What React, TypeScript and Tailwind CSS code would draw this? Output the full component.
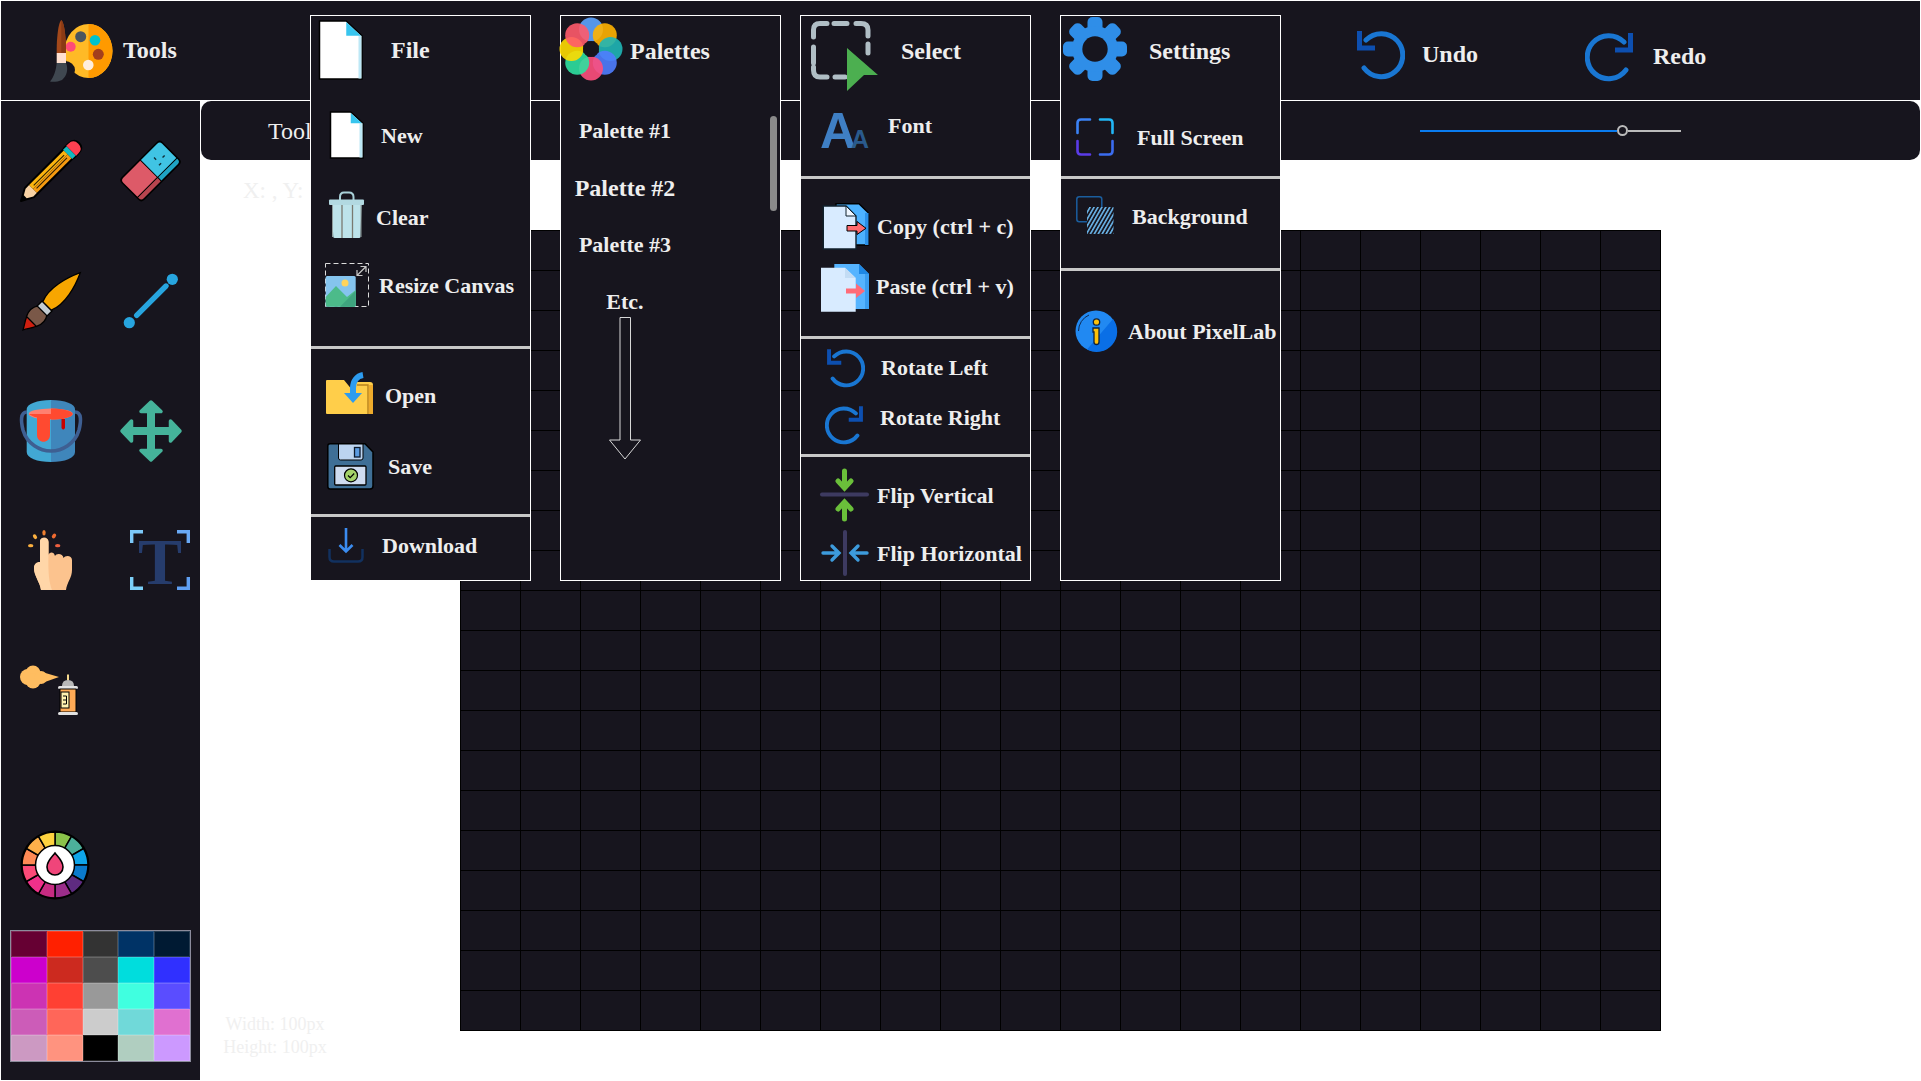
import type { ReactNode } from 'react'

const BG = '#17151e'

function Icon({ w, h, children, className = '' }: { w: number; h: number; children: ReactNode; className?: string }) {
  return (
    <svg width={w} height={h} viewBox={`0 0 ${w} ${h}`} className={`block shrink-0 overflow-visible ${className}`}>
      {children}
    </svg>
  )
}

function PaletteIcon() {
  return (
    <Icon w={62} h={62}>
      <ellipse cx="38.5" cy="31" rx="24" ry="27" fill="#ffba26" />
      <path d="M38.5 4a24 27 0 0 1 0 54Z" fill="#ff9a00" />
      <ellipse cx="15" cy="50" rx="10" ry="9" fill={BG} />
      <circle cx="30.7" cy="16.7" r="5.5" fill="#4a5560" />
      <circle cx="45" cy="20.3" r="5.3" fill="#00c2cc" />
      <circle cx="20.7" cy="26.7" r="5" fill="#ff4b77" />
      <circle cx="48.3" cy="34.3" r="5.5" fill="#a33f1c" />
      <circle cx="38.3" cy="45" r="5.3" fill="#ffeedd" />
      <path d="M6.7 33C6.5 20 8 3 11.3 0C14.7 3 16.2 20 16 33Z" fill="#a3481a" />
      <path d="M11.3 0C14.7 3 16.2 20 16 33H11.3Z" fill="#8a3a14" />
      <rect x="6.7" y="33" width="9.3" height="10" fill="#ffe0d0" />
      <path d="M6.7 43H16C18.5 49 17 56 12 60C8 62 2 62 0 61.5C4 57 6 50 6.7 43Z" fill="#3f4750" />
    </Icon>
  )
}

function FileIcon({ w, h }: { w: number; h: number }) {
  const fold = w * 0.35
  return (
    <Icon w={w} h={h}>
      <path d={`M1.5 1H${w - fold - 1}L${w - 1} ${fold}V${h - 1}H1.5Z`} fill="#fff" stroke="#000" strokeWidth="1.5" />
      <rect x={w - 4.5} y={fold} width="3" height={h - fold - 1.5} fill="#bde8f6" />
      <path d={`M${w - fold - 1} 2L${w - 2} ${fold}H${w - fold - 1}Z`} fill="#38c5ee" />
    </Icon>
  )
}

function TrashIcon() {
  return (
    <Icon w={35} h={48}>
      <path d="M11 9V6Q11 1.5 15 1.5H20Q24.5 1.5 24.5 6V9" fill="none" stroke="#a9d0d8" strokeWidth="2" />
      <path d="M3 14H32.5L31.5 45.5Q31.5 47 30 47H6Q4.2 47 4.2 45.5Z" fill="#bde3ea" />
      <rect x="0" y="8.5" width="35" height="5.5" rx="1" fill="#b2d9e1" />
      <path d="M13 14V47M23.5 14V47" stroke="#7a7a70" strokeWidth="1.3" />
      <path d="M3.5 14V46M32 14V46" stroke="#8f9d9c" strokeWidth="1" />
    </Icon>
  )
}

function ResizeIcon() {
  return (
    <Icon w={44} h={44}>
      <rect x="0.5" y="0.5" width="43" height="43" fill="none" stroke="#dcdcdc" strokeWidth="1" strokeDasharray="5 3" />
      <rect x="0.7" y="13" width="30" height="30.7" rx="1.5" fill="#85c4ee" />
      <circle cx="20" cy="20" r="3.5" fill="#ffd45c" />
      <path d="M0.7 41V34L11 23L22 34L30.7 27V42Q30.7 43.7 29 43.7H2.5Q0.7 43.7 0.7 41Z" fill="#4cbb8a" />
      <path d="M15 43.7L30.7 28V42Q30.7 43.7 29 43.7Z" fill="#3fa57f" />
      <path d="M32 12.5L41 3.5M35.5 3.5H41V9M32 7V12.5H37.5" fill="none" stroke="#c8c8c8" strokeWidth="1.2" />
    </Icon>
  )
}

function OpenIcon() {
  return (
    <Icon w={48} h={40}>
      <path d="M0 6Q0 5 1 5H18L27 16V7H44Q47 7 47 10V38Q47 39 46 39H1Q0 39 0 38Z" fill="#ffce4a" />
      <path d="M31 10H42V39" fill="none" stroke="#b9811c" strokeWidth="1.4" />
      <path d="M43 10H47V39H43Z" fill="#eeab2c" />
      <path d="M37 0C31 1 27 6 27 13V20" fill="none" stroke="#2d9cf0" strokeWidth="6" />
      <path d="M18 18H36L27 28Z" fill="#2d9cf0" />
    </Icon>
  )
}

function SaveIcon() {
  return (
    <Icon w={47} h={47}>
      <path d="M3 0.8H38L46 9V43Q46 46 43 46H3Q0.8 46 0.8 43V3Q0.8 0.8 3 0.8Z" fill="#3f6f96" stroke="#000" strokeWidth="1.5" />
      <path d="M11.5 1H36V15Q36 17 34 17H13.5Q11.5 17 11.5 15Z" fill="#bcd4f0" stroke="#000" strokeWidth="1" />
      <rect x="27.5" y="4.5" width="5.5" height="9.5" fill="#5b9be0" stroke="#0c1a2c" strokeWidth="1.3" />
      <rect x="7.7" y="23" width="31.3" height="19" rx="1" fill="#cfdcf0" stroke="#000" strokeWidth="1.3" />
      <circle cx="24" cy="32.3" r="6.5" fill="#a4d36a" stroke="#000" strokeWidth="1.2" />
      <path d="M21 32.5L23.2 34.7L27.2 30.5" fill="none" stroke="#000" strokeWidth="1.2" />
    </Icon>
  )
}

function DownloadIcon() {
  return (
    <Icon w={36} h={35}>
      <path d="M1.5 21V29Q1.5 33.5 6 33.5H30Q34.5 33.5 34.5 29V21" fill="none" stroke="#12315f" strokeWidth="2.5" />
      <path d="M18 0V23M11.5 17L18 23.5L24.5 17" fill="none" stroke="#3b8cf0" strokeWidth="2.6" />
    </Icon>
  )
}

function FlowerIcon() {
  const petals = ['#5da4ff', '#ffb300', '#1fb6b6', '#4f7dff', '#ff4f7d', '#2ee0a0', '#ffdc00', '#ff5a6a']
  return (
    <Icon w={62} h={62}>
      {petals.map((c, i) => {
        const a = (i * Math.PI) / 4
        return <circle key={c} cx={31 + 19.5 * Math.sin(a)} cy={31 - 19.5 * Math.cos(a)} r="12" fill={c} opacity="0.9" />
      })}
      <circle cx="31" cy="31" r="8" fill={BG} />
    </Icon>
  )
}

function SelectIcon() {
  return (
    <Icon w={67} h={70}>
      <path
        d="M2.5 16V9Q2.5 2.5 9 2.5H16M23 2.5H36M45 2.5H50Q57 2.5 57 9V15M57 23V32M2.5 26V42M2.5 46V49Q2.5 56 9 56H16M24 56H34"
        fill="none"
        stroke="#b0bec5"
        strokeWidth="5"
        strokeLinecap="round"
      />
      <path d="M36 27L67 54H53L36 70Z" fill="#4caf50" />
    </Icon>
  )
}

function FontIcon() {
  return (
    <Icon w={48} h={37}>
      <text x="-1" y="36" fontFamily="'Liberation Sans', sans-serif" fontWeight="700" fontSize="50" fill="#3f7fc4">A</text>
      <text x="30" y="36" fontFamily="'Liberation Sans', sans-serif" fontWeight="700" fontSize="25" fill="#2a5a8c">A</text>
    </Icon>
  )
}

function CopyIcon() {
  return (
    <Icon w={47} h={47}>
      <path d="M14 0.8H37L46.5 10V42H14Z" fill="#4db2ff" stroke="#000" strokeWidth="1.4" />
      <path d="M43 10H46.5V42H43Z" fill="#2b90e8" />
      <path d="M1.3 3H24L34 13V46H1.3Z" fill="#d8ebff" stroke="#10202c" strokeWidth="1.4" />
      <path d="M24 3V13H34Z" fill="#eef6ff" stroke="#10202c" strokeWidth="1" />
      <path d="M25 22.5H35V18.5L44 25.3L35 31.5V28H25Z" fill="#ff6b70" stroke="#000" strokeWidth="1" />
    </Icon>
  )
}

function PasteIcon() {
  return (
    <Icon w={48} h={48}>
      <path d="M13.3 0H38L48 10V45H13.3Z" fill="#56b4ff" />
      <path d="M38 0L48 10H38Z" fill="#1e88e5" />
      <path d="M44 10H48V45H44Z" fill="#3a9df0" />
      <path d="M0 3.7H24L34.7 14V47.7H0Z" fill="#d8ebff" />
      <path d="M24 3.7L34.7 14H24Z" fill="#c3dcf4" />
      <path d="M25 24.5H35V19.5L44 27L35 34V29.5H25Z" fill="#ff6b78" />
    </Icon>
  )
}

function RotateIcon({ w, h, flip = false, stroke = 5 }: { w: number; h: number; flip?: boolean; stroke?: number }) {
  return (
    <svg width={w} height={h} viewBox="0 0 48 52" className={`block shrink-0 ${flip ? '-scale-x-100' : ''}`}>
      <path d="M9 12A21.5 21.5 0 1 1 7 40" fill="none" stroke="#1976d2" strokeWidth={stroke} strokeLinecap="round" />
      <path d="M2.5 3V20H18" fill="none" stroke="#0d4fb0" strokeWidth={stroke} />
    </svg>
  )
}

function FlipVIcon() {
  return (
    <Icon w={49} h={50}>
      <rect x="0" y="22.5" width="49" height="4" rx="2" fill="#3d3a60" />
      <path d="M24.5 1V17M18 11L24.5 18L31 11M24.5 49V33M18 39L24.5 32L31 39" fill="none" stroke="#6abf3a" strokeWidth="5" strokeLinecap="round" />
    </Icon>
  )
}

function FlipHIcon() {
  return (
    <Icon w={46} h={46}>
      <rect x="21" y="0" width="4" height="46" rx="2" fill="#3d3a60" />
      <path d="M1 23H16M10 16L17 23L10 30M45 23H30M36 16L29 23L36 30" fill="none" stroke="#3d9bdc" strokeWidth="3.4" strokeLinecap="round" />
    </Icon>
  )
}

function GearIcon() {
  return (
    <Icon w={64} h={64}>
      {[0, 45, 90, 135].map(a => (
        <rect key={a} x="24.5" y="0" width="15" height="64" rx="5" fill="#2f8ee8" transform={`rotate(${a} 32 32)`} />
      ))}
      <circle cx="32" cy="32" r="23" fill="#2f8ee8" />
      <circle cx="32" cy="32" r="12.7" fill={BG} />
    </Icon>
  )
}

function FullScreenIcon() {
  return (
    <Icon w={38} h={38}>
      <g fill="none" strokeWidth="2.6" strokeLinecap="round">
        <path d="M1.5 15V5Q1.5 1.5 5 1.5H14" stroke="#3b82f6" />
        <path d="M24 1.5H33Q36.5 1.5 36.5 5V15" stroke="#22b6f5" />
        <path d="M1.5 23V33Q1.5 36.5 5 36.5H14" stroke="#5b3be8" />
        <path d="M24 36.5H33Q36.5 36.5 36.5 33V23" stroke="#3b6cf0" />
      </g>
    </Icon>
  )
}

function BackgroundIcon() {
  return (
    <Icon w={38} h={38}>
      <defs>
        <pattern id="hatch" width="3.4" height="3.4" patternUnits="userSpaceOnUse" patternTransform="rotate(-60)">
          <rect width="3.4" height="1.6" fill="#6ab4e8" />
        </pattern>
      </defs>
      <rect x="0.8" y="0.8" width="25" height="25" rx="2.5" fill="none" stroke="#1b5e9e" strokeWidth="1.5" />
      <rect x="11" y="11" width="26.5" height="27" fill={BG} />
      <rect x="11" y="11" width="26.5" height="27" fill="url(#hatch)" />
    </Icon>
  )
}

function InfoIcon() {
  return (
    <Icon w={42} h={42}>
      <circle cx="21" cy="21" r="20.5" fill="#2189f2" />
      <path d="M38 9A20.5 20.5 0 0 1 12 39.5Z" fill="#0a6fe6" />
      <path d="M3.5 21A17.5 17.5 0 0 1 14 5" fill="none" stroke="#0d2a52" strokeWidth="1" />
      <circle cx="21.5" cy="12" r="3.2" fill="#ffc107" stroke="#10233f" strokeWidth="1.3" />
      <path d="M18 18H24V32Q24 34.5 21.5 34.5Q19 34.5 19 32V22H18Z" fill="#ffc107" stroke="#10233f" strokeWidth="1.3" />
    </Icon>
  )
}

function PencilIcon() {
  return (
    <Icon w={62} h={62}>
      <g transform="translate(1 61) rotate(-45)">
        <path d="M0 0L12 -6.5H68V-7H74Q82 -7 82 0Q82 7 74 7H68V6.5H12Z" fill="#000" stroke="#000" strokeWidth="2" strokeLinejoin="round" />
        <path d="M6 -2L12 -5.5H17V5.5H12L6 2Z" fill="#f8d2a4" />
        <path d="M17 -5.5H66V0H17Z" fill="#fbb40f" />
        <path d="M17 0H66V5.5H17Z" fill="#f59a10" />
        <path d="M20 -2H63M20 2H63" stroke="#2e2106" strokeWidth="1.1" />
        <rect x="66" y="-6.5" width="5" height="13" fill="#12b8c0" />
        <path d="M71 -7H74Q81 -7 81 0Q81 7 74 7H71Z" fill="#ff4050" />
      </g>
    </Icon>
  )
}

function EraserIcon() {
  return (
    <Icon w={62} h={62}>
      <g transform="translate(30.5 31) rotate(-45)">
        <rect x="-29" y="-16" width="58" height="32" rx="4" fill="#000" />
        <path d="M-27.5 -11Q-27.5 -14.5 -24 -14.5H0V9H-27.5Z" fill="#dd5a68" />
        <path d="M-27.5 10H0V14.5H-24Q-27.5 14.5 -27.5 11Z" fill="#b8454f" />
        <path d="M1 -14.5H24Q27.5 -14.5 27.5 -11V9H1Z" fill="#40c4e4" />
        <path d="M1 10H27.5V11Q27.5 14.5 24 14.5H1Z" fill="#1fa4c4" />
        <path d="M12 -7V-4M18 -1H21M10 2H13" stroke="#10303a" strokeWidth="1.4" />
      </g>
    </Icon>
  )
}

function BrushIcon() {
  return (
    <Icon w={62} h={62}>
      <g transform="translate(3 59) rotate(-45)" stroke="#000" strokeWidth="1.3">
        <path d="M0 0C6 -3 11 -8 17 -8V8C11 8 6 3 0 0Z" fill="#cf1f10" />
        <path d="M12 -7C18 -10 24 -9 28 -6V6C24 9 18 10 12 7Z" fill="#7a5848" />
        <rect x="27" y="-7" width="7" height="14" fill="#c4ccd2" />
        <path d="M34 -6C48 -12 68 -6 81 0C68 6 48 12 34 6Z" fill="#f7a600" />
      </g>
    </Icon>
  )
}

function LineIcon() {
  return (
    <Icon w={62} h={62}>
      <circle cx="9.3" cy="52.7" r="5.6" fill="#27a5df" />
      <circle cx="52.3" cy="9.3" r="5.6" fill="#27a5df" />
      <path d="M16.7 45.3L46 16" stroke="#27a5df" strokeWidth="5.4" strokeLinecap="round" />
    </Icon>
  )
}

function BucketIcon() {
  return (
    <Icon w={62} h={62}>
      <path d="M6.7 9V52C6.7 58 17 62 31 62V0C17 0 6.7 4 6.7 9Z" fill="#42a8d4" />
      <path d="M55 9V52C55 58 45 62 31 62V0C45 0 55 4 55 9Z" fill="#3f86bb" />
      <ellipse cx="30.7" cy="14" rx="22" ry="5.5" fill="#ff8070" />
      <path d="M31 8.5C43 8.5 52.7 11 52.7 14C52.7 17 43 19.5 31 19.5Z" fill="#ff4a30" />
      <path d="M8.7 14C12 16 14 17 17 17.5V35C17 44 30 44 30 35V19H44V14Z" fill="#ff4a30" />
      <path d="M41.5 19H45V28Q43.2 31 41.5 28Z" fill="#c80000" />
      <path d="M7 12C0 12 1 22 3 30C7 44 20 51 31 51C42 51 55 44 59 30C61 22 62 12 55 12" fill="none" stroke="#3e5f92" strokeWidth="3.6" />
    </Icon>
  )
}

function MoveIcon() {
  return (
    <Icon w={62} h={62}>
      <path d="M27 10H35V27H52V35H35V52H27V35H10V27H27Z" fill="#45b39a" />
      {[0, 90, 180, 270].map(a => (
        <path
          key={a}
          d="M31 2L41 11.5H21Z"
          fill="#45b39a"
          stroke="#45b39a"
          strokeWidth="3.5"
          strokeLinejoin="round"
          transform={`rotate(${a} 31 31)`}
        />
      ))}
    </Icon>
  )
}

function TapIcon() {
  return (
    <Icon w={44} h={60}>
      <path
        d="M12 12C12 6 20.5 6 20.5 12V25C21 22 26 21 27 26C28 23 35 23 35.5 28C37 25 44 25 44 30V40C44 48 39 52 38 60H13C12 52 6 46 6 38C6 34 9 32 12 32Z"
        fill="#fcc38e"
      />
      <path d="M16 8C13 8 12 9 12 12V32C9 32 6 34 6 38C6 46 12 52 13 60H24C21 52 20 42 20.5 25V12C20.5 9 18 8 16 8Z" fill="#ffd6a8" />
      <ellipse cx="7" cy="6.7" rx="1.8" ry="2.6" fill="#fbb040" transform="rotate(-35 7 6.7)" />
      <ellipse cx="16" cy="2.7" rx="1.7" ry="2.7" fill="#f08030" />
      <ellipse cx="26" cy="6" rx="1.8" ry="2.6" fill="#f06a30" transform="rotate(40 26 6)" />
      <ellipse cx="29.7" cy="15.7" rx="2.7" ry="1.6" fill="#ee6040" />
      <ellipse cx="2.7" cy="15.7" rx="2.7" ry="1.6" fill="#fbb040" />
    </Icon>
  )
}

function TextToolIcon() {
  return (
    <Icon w={60} h={60}>
      <path d="M1.7 13V1.7H13" fill="none" stroke="#7cc8f8" strokeWidth="3.4" />
      <path d="M47 1.7H58.3V13" fill="none" stroke="#69a9f5" strokeWidth="3.4" />
      <path d="M1.7 47V58.3H13" fill="none" stroke="#7cd0f8" strokeWidth="3.4" />
      <path d="M47 58.3H58.3V47" fill="none" stroke="#5f9ff2" strokeWidth="3.4" />
      <text x="30" y="54" textAnchor="middle" fontFamily="'Liberation Serif', serif" fontWeight="700" fontSize="66" fill="#263c6c">T</text>
    </Icon>
  )
}

function SprayIcon() {
  return (
    <Icon w={58} h={51}>
      <circle cx="8" cy="12" r="8" fill="#ffbd60" />
      <circle cx="13" cy="8" r="7.5" fill="#ffbd60" />
      <circle cx="13" cy="16" r="7.5" fill="#ffbd60" />
      <circle cx="21" cy="12.5" r="6.5" fill="#ffbd60" />
      <path d="M22 7L39 12L22 18Z" fill="#ffbd60" />
      <rect x="47" y="9.5" width="2" height="6" fill="#f5d98e" />
      <path d="M42 21Q42 15 48 15Q54 15 54 21Z" fill="#b8b8b8" />
      <rect x="38" y="21" width="20" height="3" rx="1.5" fill="#e2e2e2" />
      <rect x="40" y="24" width="16" height="23" fill="#ffaa55" stroke="#000" strokeWidth="1" />
      <rect x="41" y="27" width="8" height="16" fill="#fff1b0" stroke="#000" strokeWidth="1" />
      <path d="M43 31H46.5V39H43M43 35H46.5" fill="none" stroke="#000" strokeWidth="1" />
      <rect x="38" y="47" width="20" height="3" rx="1.5" fill="#e2e2e2" />
    </Icon>
  )
}

function ColorWheelIcon() {
  const colors = ['#8bc34a', '#4caf9a', '#0ea5e9', '#0a7acc', '#5e2b80', '#9b2d8a', '#c72b82', '#f0308a', '#fb4a78', '#ff8a55', '#fdb04a', '#fed23f']
  const point = (r: number, i: number) => {
    const a = (i * Math.PI) / 6
    return `${35 + r * Math.sin(a)} ${35 - r * Math.cos(a)}`
  }
  return (
    <Icon w={70} h={70}>
      <circle cx="35" cy="35" r="34.5" fill="#000" />
      {colors.map((c, i) => (
        <path key={c} d={`M${point(33, i)}A33 33 0 0 1 ${point(33, i + 1)}L35 35Z`} fill={c} stroke="#000" strokeWidth="1.5" />
      ))}
      <circle cx="35" cy="35" r="19.5" fill="#fff" stroke="#000" strokeWidth="1.5" />
      <path d="M35 23C38 27 43 31 43 37C43 42 39 45 35 45C31 45 27 42 27 37C27 31 32 27 35 23Z" fill="#f0457a" stroke="#000" strokeWidth="1.6" />
    </Icon>
  )
}

function DownArrow() {
  return (
    <Icon w={32} h={143}>
      <path d="M11 0.5H21.5V123H31.5L16 142L0.5 123H11Z" fill="none" stroke="#d8d8d8" strokeWidth="1" />
    </Icon>
  )
}

function Row({ className, labelClass = '', icon, label }: { className: string; labelClass?: string; icon: ReactNode; label: string }) {
  return (
    <div className={`flex items-center ${className}`}>
      {icon}
      <span className={`whitespace-nowrap font-bold ${labelClass || 'text-[22px]'}`}>{label}</span>
    </div>
  )
}

function Menu({ className, children }: { className: string; children: ReactNode }) {
  return <div className={`absolute top-[15px] h-[566px] border border-white bg-[#17151e] ${className}`}>{children}</div>
}

const swatches = [
  '#660033', '#ff2000', '#333333', '#003366', '#001a33',
  '#cc00cc', '#cc2a1f', '#4d4d4d', '#00dddd', '#3030ff',
  '#cc33b3', '#ff4033', '#999999', '#40ffe0', '#5a4dff',
  '#cc5cb8', '#ff6659', '#cccccc', '#70d9d9', '#e070d0',
  '#cc99c2', '#ff937f', '#000000', '#b0cec0', '#cc99ff',
]

export default function App() {
  return (
    <div className="relative flex h-screen w-screen flex-col overflow-hidden bg-white p-px font-['Liberation_Serif',serif] text-[#eeeeee]">
      <header className="flex h-[100px] shrink-0 items-center border-b border-white bg-[#17151e]">
        <div className="flex w-[1356px] items-center gap-[11px] pl-[49px]">
          <PaletteIcon />
          <span className="pb-[2px] text-2xl font-bold">Tools</span>
        </div>
        <div className="mt-[7px] flex w-[228px] items-center gap-[17px]">
          <RotateIcon w={48} h={52} />
          <span className="text-2xl font-bold">Undo</span>
        </div>
        <div className="mt-[11px] flex items-center gap-[20px]">
          <RotateIcon w={48} h={52} flip />
          <span className="text-2xl font-bold">Redo</span>
        </div>
      </header>

      <div className="flex min-h-0 flex-1">
        <aside className="w-[199px] shrink-0 bg-[#17151e]">
          <div className="grid grid-cols-[100px_99px] auto-rows-[130px] pl-[19px] pt-[39px]">
            <PencilIcon />
            <EraserIcon />
            <div className="mt-px"><BrushIcon /></div>
            <LineIcon />
            <BucketIcon />
            <MoveIcon />
            <div className="ml-[8px]"><TapIcon /></div>
            <div className="ml-[10px]"><TextToolIcon /></div>
            <div className="mt-[5px]"><SprayIcon /></div>
          </div>
          <div className="ml-[19px] mt-[40px]"><ColorWheelIcon /></div>
          <div className="ml-[9px] mt-[30px] grid w-[181px] grid-cols-5 border border-[#8c8c9c]">
            {swatches.map((c, i) => (
              <div key={i} className="h-[26px] border border-white/15" style={{ backgroundColor: c }} />
            ))}
          </div>
        </aside>

        <main className="ml-px flex min-w-0 flex-1 flex-col">
          <div className="flex h-[59px] shrink-0 items-center rounded-[10px] bg-[#17151e] pl-[67px] pr-[239px]">
            <span className="text-2xl">Tools</span>
            <div className="ml-auto flex items-center">
              <div className="h-[2px] w-[197px] bg-[#0a7cf0]" />
              <div className="h-[11px] w-[11px] rounded-full border-2 border-[#bbbbbb] bg-[#17151e]" />
              <div className="h-[2px] w-[53px] bg-[#bbbbbb]" />
            </div>
          </div>

          <div className="flex min-h-0 flex-1">
            <div className="flex w-[259px] flex-col justify-between pb-[21px] pt-[14px] text-[#f0f0f0]">
              <span className="pl-[42px] text-[23px]">X: , Y:</span>
              <div className="w-[148px] text-center text-lg leading-[23px]">
                <div>Width: 100px</div>
                <div>Height: 100px</div>
              </div>
            </div>
            <div className="mt-[70px] grid h-[801px] w-[1201px] grid-cols-[repeat(20,60px)] grid-rows-[repeat(20,40px)] border-l border-t border-black bg-[#17151e]">
              {Array.from({ length: 400 }, (_, i) => (
                <div key={i} className="border-b border-r border-black" />
              ))}
            </div>
          </div>
        </main>
      </div>

      <Menu className="left-[310px] w-[221px]">
        <div className="h-[333px] overflow-hidden border-b-[3px] border-[#c8c8c8]">
          <Row className="h-[60px] mt-[4px] pl-[7px] gap-[28px]" labelClass="text-2xl" icon={<FileIcon w={45} h={60} />} label="File" />
          <Row className="h-[48px] mt-[31px] pl-[18px] gap-[17px]" icon={<FileIcon w={35} h={48} />} label="New" />
          <Row className="h-[48px] mt-[32px] pl-[18px] gap-[12px]" labelClass="pt-[5px] text-[22px]" icon={<TrashIcon />} label="Clear" />
          <Row className="h-[44px] mt-[24px] pl-[14px] gap-[10px]" icon={<ResizeIcon />} label="Resize Canvas" />
        </div>
        <div className="h-[168px] overflow-hidden border-b-[3px] border-[#c8c8c8]">
          <Row className="h-[40px] mt-[26px] pl-[15px] gap-[11px]" icon={<OpenIcon />} label="Open" />
          <Row className="h-[47px] mt-[28px] pl-[16px] gap-[14px]" icon={<SaveIcon />} label="Save" />
        </div>
        <Row className="h-[35px] mt-[11px] pl-[17px] gap-[18px]" icon={<DownloadIcon />} label="Download" />
      </Menu>

      <Menu className="left-[560px] w-[221px]">
        <Row className="h-[62px] mt-[2px] -ml-px gap-[8px]" labelClass="pt-[3px] text-2xl" icon={<FlowerIcon />} label="Palettes" />
        <div className="mt-[22px] flex w-[128px] flex-col items-center font-bold">
          <div className="flex h-[57px] items-center text-[22px]">Palette #1</div>
          <div className="flex h-[57px] items-center text-2xl">Palette #2</div>
          <div className="flex h-[57px] items-center text-[22px]">Palette #3</div>
          <div className="flex h-[57px] items-center text-[22px]">Etc.</div>
          <div className="-mt-[13px]"><DownArrow /></div>
        </div>
        <div className="absolute left-[209px] top-[100px] h-[95px] w-[7px] rounded-full bg-[#8a8a8a]" />
      </Menu>

      <Menu className="left-[800px] w-[231px]">
        <div className="h-[163px] overflow-hidden border-b-[3px] border-[#c8c8c8]">
          <Row className="h-[70px] mt-[5px] pl-[10px] gap-[23px]" labelClass="pb-[10px] text-2xl" icon={<SelectIcon />} label="Select" />
          <Row className="h-[37px] mt-[21px] pl-[20px] gap-[19px]" labelClass="pb-[11px] text-[22px]" icon={<FontIcon />} label="Font" />
        </div>
        <div className="h-[160px] overflow-hidden border-b-[3px] border-[#c8c8c8]">
          <Row className="h-[47px] mt-[24px] pl-[21px] gap-[8px]" icon={<CopyIcon />} label="Copy (ctrl + c)" />
          <Row className="h-[48px] mt-[14px] pl-[20px] gap-[7px]" labelClass="pb-[4px] text-[22px]" icon={<PasteIcon />} label="Paste (ctrl + v)" />
        </div>
        <div className="h-[118px] overflow-hidden border-b-[3px] border-[#c8c8c8]">
          <Row className="h-[40px] mt-[8px] pl-[26px] gap-[16px]" icon={<RotateIcon w={38} h={41} stroke={5} />} label="Rotate Left" />
          <Row className="h-[40px] mt-[17px] pl-[24px] gap-[17px]" labelClass="pb-[14px] text-[22px]" icon={<RotateIcon w={38} h={41} stroke={5} flip />} label="Rotate Right" />
        </div>
        <Row className="h-[50px] mt-[13px] pl-[19px] gap-[8px]" icon={<FlipVIcon />} label="Flip Vertical" />
        <Row className="h-[46px] mt-[10px] pl-[21px] gap-[9px]" icon={<FlipHIcon />} label="Flip Horizontal" />
      </Menu>

      <Menu className="left-[1060px] w-[221px]">
        <div className="h-[163px] overflow-hidden border-b-[3px] border-[#c8c8c8]">
          <Row className="h-[64px] mt-[1px] pl-[2px] gap-[22px]" labelClass="pt-[3px] text-2xl" icon={<GearIcon />} label="Settings" />
          <Row className="h-[38px] mt-[37px] pl-[15px] gap-[23px]" icon={<FullScreenIcon />} label="Full Screen" />
        </div>
        <div className="h-[92px] overflow-hidden border-b-[3px] border-[#c8c8c8]">
          <Row className="h-[38px] mt-[17px] pl-[15px] gap-[18px]" labelClass="pt-[3px] text-[22px]" icon={<BackgroundIcon />} label="Background" />
        </div>
        <Row className="h-[42px] mt-[39px] pl-[14px] gap-[11px]" icon={<InfoIcon />} label="About PixelLab" />
      </Menu>
    </div>
  )
}
